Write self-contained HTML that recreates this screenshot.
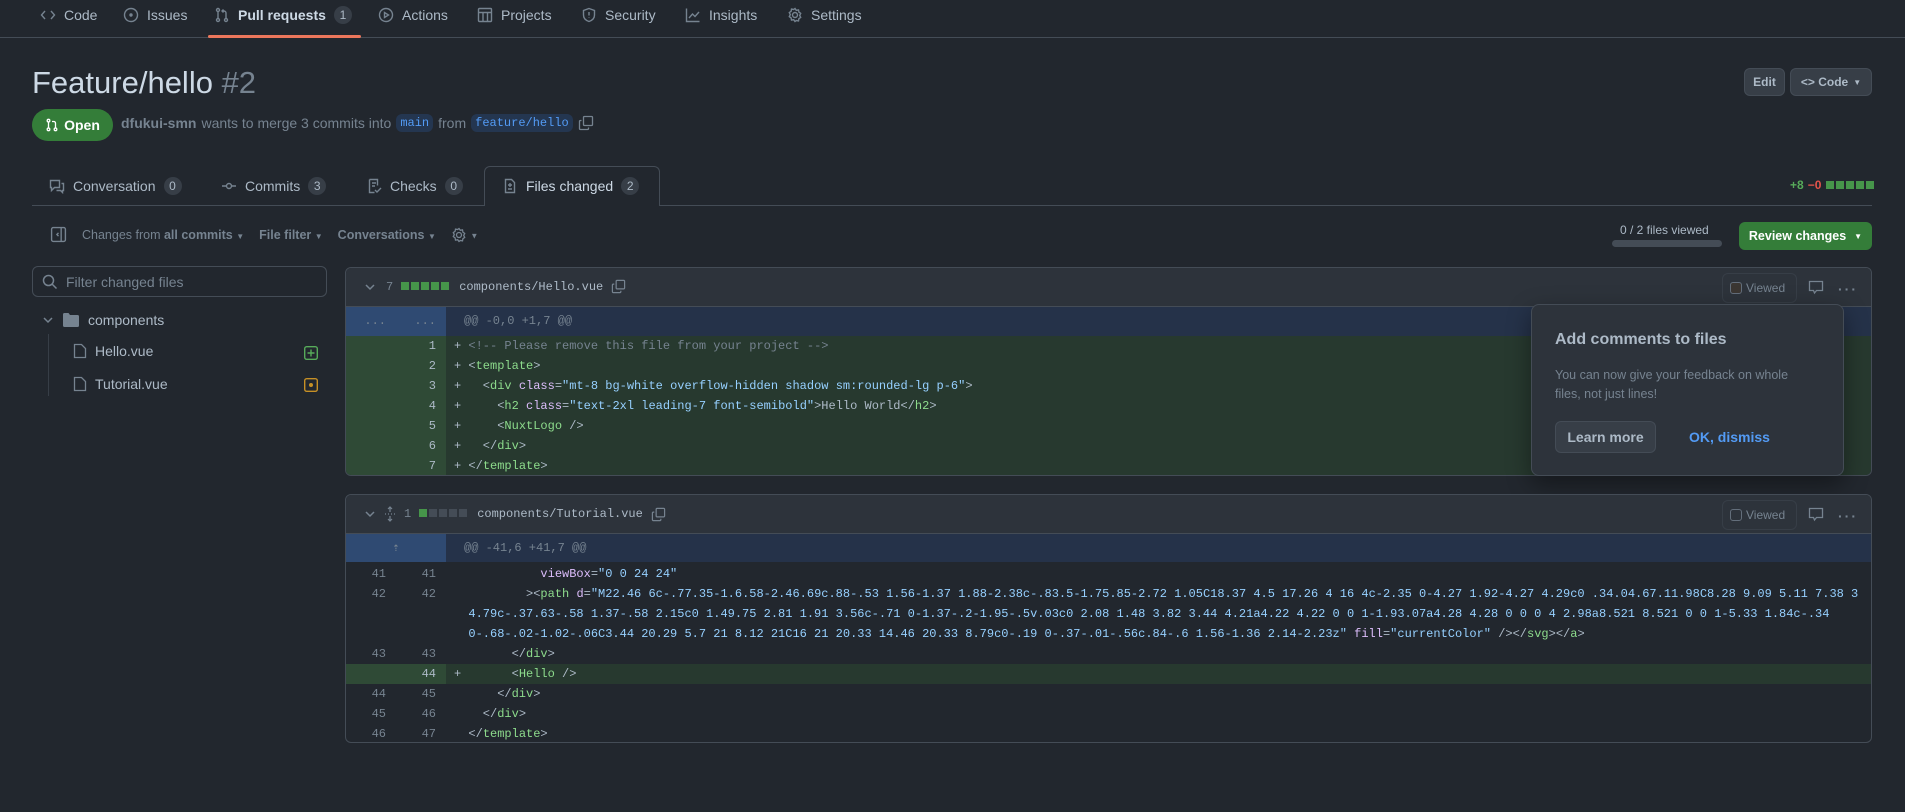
<!DOCTYPE html>
<html><head><meta charset="utf-8"><style>
*{box-sizing:border-box;margin:0;padding:0}
body{width:1905px;height:812px;background:#22272e;color:#adbac7;font-family:"Liberation Sans",sans-serif;font-size:14px;position:relative;overflow:hidden}
.a{position:absolute}
.nav{top:0;left:0;width:1905px;height:38px;border-bottom:1px solid #444c56}
.ni{position:absolute;top:5px;height:20px;display:flex;align-items:center;gap:8px;font-size:14px;color:#adbac7;white-space:nowrap}
.ni svg{width:16px;height:16px;fill:none;stroke:#768390;stroke-width:1.4}
.cnt{display:inline-block;background:#373e47;color:#adbac7;border-radius:10px;font-size:12px;min-width:18px;height:18px;line-height:18px;text-align:center;padding:0 5px}
.btn{background:#373e47;border:1px solid #444c56;border-radius:6px;color:#adbac7;font-size:12px;font-weight:bold;display:flex;align-items:center;justify-content:center}
.mono{font-family:"Liberation Mono",monospace;font-size:12px}
.tab{position:absolute;top:166px;height:39px;display:flex;align-items:center;gap:8px;font-size:14px;color:#adbac7}
.tab svg{width:16px;height:16px;fill:none;stroke:#768390;stroke-width:1.4}
.box{border:1px solid #444c56;border-radius:6px;overflow:hidden}
.fh{height:39px;background:#2d333b;border-bottom:1px solid #444c56;position:relative}
.row{height:20px;display:flex;white-space:pre;line-height:20px}
.g1{width:50px;text-align:right;padding-right:10px;color:#768390}
.g2{width:50px;text-align:right;padding-right:10px;color:#768390}
.cd{padding-left:8px;color:#adbac7;flex:1}
.add .g1,.add .g2{background:#2f4a36;color:#adbac7}
.add .cd{background:#27392f}
.hk{height:29px;line-height:29px}
.hk .g1,.hk .g2{background:#2f4a72}
.hk .cd{background:#253249;color:#768390;padding-left:18px}
.t{color:#8ddb8c}.at{color:#dcbdfb}.s{color:#96d0ff}.cm{color:#768390}
.sq{display:inline-block;width:8px;height:8px;margin-right:2px;background:#46954a}
.sqg{background:#444c56}
.viewed{position:absolute;top:5px;height:30px;width:75px;border:1px solid #373e47;border-radius:6px;display:flex;align-items:center;gap:4px;padding-left:7px;font-size:12px;color:#768390}
.cb{width:12px;height:12px;border:1px solid #636e7b;border-radius:3px;background:#3b3632}
.dots{position:absolute;left:1492px;top:13px;color:#768390;font-size:14px;letter-spacing:2px;font-family:"Liberation Sans",sans-serif;font-weight:bold}
</style></head><body>

<div class="a nav">
 <div class="ni" style="left:40px"><svg viewBox="0 0 16 16"><path d="M5 4L1.5 8 5 12M11 4l3.5 4L11 12"/></svg>Code</div>
 <div class="ni" style="left:123px"><svg viewBox="0 0 16 16"><circle cx="8" cy="8" r="6.5"/><circle cx="8" cy="8" r="1" fill="#768390"/></svg>Issues</div>
 <div class="ni" style="left:214px;font-weight:bold;color:#cdd9e5"><svg viewBox="0 0 16 16"><circle cx="4" cy="3" r="1.5"/><circle cx="4" cy="13" r="1.5"/><circle cx="12" cy="13" r="1.5"/><path d="M4 4.5v7M12 11.5V6a2 2 0 0 0-2-2H8M9.5 2.5L8 4l1.5 1.5"/></svg>Pull requests <span class="cnt" style="font-weight:normal">1</span></div>
 <div class="ni" style="left:378px"><svg viewBox="0 0 16 16"><circle cx="8" cy="8" r="6.5"/><path d="M6.5 5.5v5l4-2.5z"/></svg>Actions</div>
 <div class="ni" style="left:477px"><svg viewBox="0 0 16 16"><rect x="1.5" y="1.5" width="13" height="13" rx="1"/><path d="M1.5 5.5h13M6 5.5v9M10.5 5.5v9"/></svg>Projects</div>
 <div class="ni" style="left:581px"><svg viewBox="0 0 16 16"><path d="M8 1.5l5.5 2v4.5c0 3.5-2.5 5.5-5.5 6.5C5 13.5 2.5 11.5 2.5 8V3.5z M8 5v3.5M8 10.5v.5"/></svg>Security</div>
 <div class="ni" style="left:685px"><svg viewBox="0 0 16 16"><path d="M1.5 1.5v13h13M4 11l3.5-4 2.5 2.5L14 5"/></svg>Insights</div>
 <div class="ni" style="left:787px"><svg viewBox="0 0 16 16"><circle cx="8" cy="8" r="2.5"/><path d="M8 1.5l1.3 1.8 2.2-.4.4 2.2 1.8 1.3-1 2 1 2-1.8 1.3-.4 2.2-2.2-.4L8 14.5l-1.3-1.8-2.2.4-.4-2.2-1.8-1.3 1-2-1-2 1.8-1.3.4-2.2 2.2.4z"/></svg>Settings</div>
 <div class="a" style="left:208px;top:35px;width:153px;height:3px;background:#ec775c;border-radius:2px"></div>
</div>

<div class="a" style="left:32px;top:62px;font-size:31px;color:#cdd9e5;line-height:42px">Feature/hello <span style="color:#768390">#2</span></div>
<div class="btn a" style="left:1744px;top:68px;width:41px;height:28px">Edit</div>
<div class="btn a" style="left:1790px;top:68px;width:82px;height:28px;gap:5px">&lt;&gt; Code <span style="font-size:8px">▼</span></div>

<div class="a" style="left:32px;top:109px;width:81px;height:32px;background:#347d39;border-radius:16px;color:#fff;font-weight:bold;display:flex;align-items:center;justify-content:center;gap:5px;font-size:14px"><svg width="14" height="14" viewBox="0 0 16 16" fill="none" stroke="#fff" stroke-width="1.5"><circle cx="4" cy="3" r="1.5"/><circle cx="4" cy="13" r="1.5"/><circle cx="12" cy="13" r="1.5"/><path d="M4 4.5v7M12 11.5V6a2 2 0 0 0-2-2H8"/></svg>Open</div>
<div class="a" style="left:121px;top:114px;font-size:14px;color:#768390;display:flex;align-items:center;gap:5px;white-space:nowrap"><b style="color:#768390">dfukui-smn</b> wants to merge 3 commits into <span class="mono" style="background:#243650;color:#539bf5;padding:2px 4px;border-radius:6px">main</span> from <span class="mono" style="background:#243650;color:#539bf5;padding:2px 4px;border-radius:6px">feature/hello</span><svg width="16" height="16" viewBox="0 0 16 16" fill="none" stroke="#768390" stroke-width="1.3"><rect x="5.5" y="1.5" width="9" height="9" rx="1"/><path d="M3.5 5.5h-1a1 1 0 0 0-1 1v7a1 1 0 0 0 1 1h7a1 1 0 0 0 1-1v-1"/></svg></div>

<div class="a" style="left:32px;top:205px;width:1840px;height:1px;background:#444c56"></div>
<div class="tab" style="left:49px"><svg viewBox="0 0 16 16"><path d="M1.5 2.5h9v7h-5l-3 3v-3h-1z M12.5 5.5h2v7h-1v2l-2-2h-4"/></svg>Conversation <span class="cnt">0</span></div>
<div class="tab" style="left:221px"><svg viewBox="0 0 16 16"><circle cx="8" cy="8" r="2.5"/><path d="M1 8h4.5M10.5 8H15"/></svg>Commits <span class="cnt">3</span></div>
<div class="tab" style="left:366px"><svg viewBox="0 0 16 16"><path d="M3.5 1.5h8v6M3.5 1.5v13h5M6 5h4M6 8h3M9 12l2 2 4-4"/></svg>Checks <span class="cnt">0</span></div>
<div class="a" style="left:484px;top:166px;width:176px;height:40px;border:1px solid #444c56;border-bottom:none;border-radius:6px 6px 0 0;background:#22272e"></div>
<div class="tab" style="left:502px;color:#cdd9e5"><svg viewBox="0 0 16 16"><path d="M3.5 1.5h6l3 3v10h-9z M8 5v4M6 7h4M6 11h4"/></svg>Files changed <span class="cnt">2</span></div>
<div class="a" style="left:1790px;top:178px;font-size:12px;font-weight:bold;display:flex;align-items:center;gap:4px"><span style="color:#57ab5a">+8</span><span style="color:#e5534b">−0</span><span><span class="sq" style="margin:0 1px"></span><span class="sq" style="margin:0 1px"></span><span class="sq" style="margin:0 1px"></span><span class="sq" style="margin:0 1px"></span><span class="sq" style="margin:0 1px"></span></span></div>

<div class="a" style="left:50px;top:226px;display:flex;align-items:center;gap:15px;font-size:12.5px;color:#768390;white-space:nowrap">
 <svg width="17" height="17" viewBox="0 0 16 16" fill="none" stroke="#768390" stroke-width="1.3"><rect x="1.5" y="1.5" width="13" height="13" rx="1.5"/><path d="M10.5 1.5v13M8 6.5L6.5 8 8 9.5"/></svg>
 <span>Changes from <b>all commits</b> <span style="font-size:8px">▼</span></span>
 <span><b>File filter</b> <span style="font-size:8px">▼</span></span>
 <span><b>Conversations</b> <span style="font-size:8px">▼</span></span>
 <span><svg width="16" height="16" viewBox="0 0 16 16" fill="none" stroke="#768390" stroke-width="1.3" style="vertical-align:middle"><circle cx="8" cy="8" r="2.5"/><path d="M8 1.5l1.3 1.8 2.2-.4.4 2.2 1.8 1.3-1 2 1 2-1.8 1.3-.4 2.2-2.2-.4L8 14.5l-1.3-1.8-2.2.4-.4-2.2-1.8-1.3 1-2-1-2 1.8-1.3.4-2.2 2.2.4z"/></svg> <span style="font-size:8px">▼</span></span>
</div>
<div class="a" style="left:1620px;top:223px;font-size:12px;color:#adbac7">0 / 2 files viewed</div>
<div class="a" style="left:1612px;top:240px;width:110px;height:7px;border-radius:4px;background:#444c56"></div>
<div class="a" style="left:1739px;top:222px;width:133px;height:28px;background:#347d39;border-radius:6px;color:#fff;font-size:12.5px;font-weight:bold;display:flex;align-items:center;justify-content:center;gap:8px">Review changes <span style="font-size:8px">▼</span></div>

<div class="a" style="left:32px;top:266px;width:295px;height:31px;border:1px solid #444c56;border-radius:6px;display:flex;align-items:center;gap:8px;padding-left:9px;color:#768390;font-size:14px"><svg width="16" height="16" viewBox="0 0 16 16" fill="none" stroke="#768390" stroke-width="1.5"><circle cx="6.5" cy="6.5" r="5"/><path d="M10 10l4.5 4.5"/></svg>Filter changed files</div>
<div class="a" style="left:42px;top:312px;display:flex;align-items:center;gap:9px;font-size:14px;color:#adbac7"><svg width="12" height="12" viewBox="0 0 12 12" fill="none" stroke="#768390" stroke-width="1.5"><path d="M2 4l4 4 4-4"/></svg><svg width="16" height="14" viewBox="0 0 16 14"><path d="M0 1.5A1.5 1.5 0 0 1 1.5 0h4l1.5 2h7.5A1.5 1.5 0 0 1 16 3.5v9a1.5 1.5 0 0 1-1.5 1.5h-13A1.5 1.5 0 0 1 0 12.5z" fill="#768390"/></svg><span>components</span></div>
<div class="a" style="left:48px;top:334px;width:1px;height:62px;background:#373e47"></div>
<div class="a" style="left:73px;top:343px;display:flex;align-items:center;gap:8px;font-size:14px;color:#adbac7"><svg width="14" height="16" viewBox="0 0 14 16" fill="none" stroke="#768390" stroke-width="1.3"><path d="M1.5 1.5h7l4 4v9h-11z"/></svg>Hello.vue</div>
<div class="a" style="left:73px;top:376px;display:flex;align-items:center;gap:8px;font-size:14px;color:#adbac7"><svg width="14" height="16" viewBox="0 0 14 16" fill="none" stroke="#768390" stroke-width="1.3"><path d="M1.5 1.5h7l4 4v9h-11z"/></svg>Tutorial.vue</div>
<svg class="a" style="left:304px;top:346px" width="14" height="14" viewBox="0 0 14 14" fill="none" stroke="#57ab5a" stroke-width="1.4"><rect x=".7" y=".7" width="12.6" height="12.6" rx="2"/><path d="M7 3.5v7M3.5 7h7"/></svg>
<svg class="a" style="left:304px;top:378px" width="14" height="14" viewBox="0 0 14 14" fill="none" stroke="#c69026" stroke-width="1.4"><rect x=".7" y=".7" width="12.6" height="12.6" rx="2"/><circle cx="7" cy="7" r="1.3" fill="#c69026"/></svg>

<!-- file 1 -->
<div class="a box mono" style="left:345px;top:267px;width:1527px;height:209px">
 <div class="fh">
  <div class="a" style="left:18px;top:11px;display:flex;align-items:center;gap:8px;color:#adbac7"><svg width="12" height="12" viewBox="0 0 12 12" fill="none" stroke="#768390" stroke-width="1.5"><path d="M2 4l4 4 4-4"/></svg><span style="color:#768390;margin-left:2px">7</span><span><span class="sq"></span><span class="sq"></span><span class="sq"></span><span class="sq"></span><span class="sq"></span></span><span>components/Hello.vue</span><svg width="15" height="15" viewBox="0 0 16 16" fill="none" stroke="#768390" stroke-width="1.3"><rect x="5.5" y="1.5" width="9" height="9" rx="1"/><path d="M3.5 5.5h-1a1 1 0 0 0-1 1v7a1 1 0 0 0 1 1h7a1 1 0 0 0 1-1v-1"/></svg></div>
  <div class="viewed" style="left:1376px;font-family:'Liberation Sans',sans-serif"><span class="cb"></span>Viewed</div>
  <svg class="a" style="left:1462px;top:12px" width="16" height="16" viewBox="0 0 16 16" fill="none" stroke="#768390" stroke-width="1.3"><path d="M1.5 1.5h13v9h-6l-2 2.5-1-2.5h-4z"/></svg>
  <div class="dots">···</div>
 </div>
 <div class="row hk"><div class="g1">...</div><div class="g2">...</div><div class="cd">@@ -0,0 +1,7 @@</div></div>
 <div class="row add"><div class="g1"></div><div class="g2">1</div><div class="cd">+ <span class="cm">&lt;!-- Please remove this file from your project --&gt;</span></div></div>
 <div class="row add"><div class="g1"></div><div class="g2">2</div><div class="cd">+ &lt;<span class="t">template</span>&gt;</div></div>
 <div class="row add"><div class="g1"></div><div class="g2">3</div><div class="cd">+   &lt;<span class="t">div</span> <span class="at">class</span>=<span class="s">"mt-8 bg-white overflow-hidden shadow sm:rounded-lg p-6"</span>&gt;</div></div>
 <div class="row add"><div class="g1"></div><div class="g2">4</div><div class="cd">+     &lt;<span class="t">h2</span> <span class="at">class</span>=<span class="s">"text-2xl leading-7 font-semibold"</span>&gt;Hello World&lt;/<span class="t">h2</span>&gt;</div></div>
 <div class="row add"><div class="g1"></div><div class="g2">5</div><div class="cd">+     &lt;<span class="t">NuxtLogo</span> /&gt;</div></div>
 <div class="row add"><div class="g1"></div><div class="g2">6</div><div class="cd">+   &lt;/<span class="t">div</span>&gt;</div></div>
 <div class="row add"><div class="g1"></div><div class="g2">7</div><div class="cd">+ &lt;/<span class="t">template</span>&gt;</div></div>
</div>

<!-- popup -->
<div class="a" style="left:1531px;top:304px;width:313px;height:172px;background:#2d333b;border:1px solid #444c56;border-radius:8px;box-shadow:0 8px 24px rgba(0,0,0,.4)">
 <div class="a" style="left:23px;top:26px;font-size:16px;font-weight:bold;color:#adbac7">Add comments to files</div>
 <div class="a" style="left:23px;top:61px;width:260px;font-size:12.5px;line-height:19px;color:#768390">You can now give your feedback on whole files, not just lines!</div>
 <div class="a btn" style="left:23px;top:116px;width:101px;height:32px;font-size:14px;color:#adbac7">Learn more</div>
 <div class="a" style="left:157px;top:124px;font-size:14px;font-weight:bold;color:#539bf5">OK, dismiss</div>
</div>

<!-- file 2 -->
<div class="a box mono" style="left:345px;top:494px;width:1527px;height:249px">
 <div class="fh">
  <div class="a" style="left:18px;top:11px;display:flex;align-items:center;gap:8px;color:#adbac7"><svg width="12" height="12" viewBox="0 0 12 12" fill="none" stroke="#768390" stroke-width="1.5"><path d="M2 4l4 4 4-4"/></svg><svg width="12" height="16" viewBox="0 0 12 16" fill="none" stroke="#768390" stroke-width="1.2"><path d="M6 1v5M4 3l2-2 2 2M6 10v5M4 13l2 2 2-2M1 8h1M4 8h1M7 8h1M10 8h1"/></svg><span style="color:#768390">1</span><span><span class="sq"></span><span class="sq sqg"></span><span class="sq sqg"></span><span class="sq sqg"></span><span class="sq sqg"></span></span><span>components/Tutorial.vue</span><svg width="15" height="15" viewBox="0 0 16 16" fill="none" stroke="#768390" stroke-width="1.3"><rect x="5.5" y="1.5" width="9" height="9" rx="1"/><path d="M3.5 5.5h-1a1 1 0 0 0-1 1v7a1 1 0 0 0 1 1h7a1 1 0 0 0 1-1v-1"/></svg></div>
  <div class="viewed" style="left:1376px;font-family:'Liberation Sans',sans-serif"><span class="cb" style="background:transparent"></span>Viewed</div>
  <svg class="a" style="left:1462px;top:12px" width="16" height="16" viewBox="0 0 16 16" fill="none" stroke="#768390" stroke-width="1.3"><path d="M1.5 1.5h13v9h-6l-2 2.5-1-2.5h-4z"/></svg>
  <div class="dots">···</div>
 </div>
 <div class="row hk" style="height:28px;line-height:28px"><div style="width:100px;background:#2f4a72;text-align:center;color:#768390">⇡</div><div class="cd" style="background:#253249;color:#768390;padding-left:18px">@@ -41,6 +41,7 @@</div></div>
 <div style="height:2px"></div>
 <div class="row"><div class="g1">41</div><div class="g2">41</div><div class="cd">            <span class="at">viewBox</span>=<span class="s">"0 0 24 24"</span></div></div>
 <div class="row" style="height:60px"><div class="g1">42</div><div class="g2">42</div><div class="cd">          &gt;&lt;<span class="t">path</span> <span class="at">d</span>=<span class="s">"M22.46 6c-.77.35-1.6.58-2.46.69c.88-.53 1.56-1.37 1.88-2.38c-.83.5-1.75.85-2.72 1.05C18.37 4.5 17.26 4 16 4c-2.35 0-4.27 1.92-4.27 4.29c0 .34.04.67.11.98C8.28 9.09 5.11 7.38 3
  4.79c-.37.63-.58 1.37-.58 2.15c0 1.49.75 2.81 1.91 3.56c-.71 0-1.37-.2-1.95-.5v.03c0 2.08 1.48 3.82 3.44 4.21a4.22 4.22 0 0 1-1.93.07a4.28 4.28 0 0 0 4 2.98a8.521 8.521 0 0 1-5.33 1.84c-.34
  0-.68-.02-1.02-.06C3.44 20.29 5.7 21 8.12 21C16 21 20.33 14.46 20.33 8.79c0-.19 0-.37-.01-.56c.84-.6 1.56-1.36 2.14-2.23z"</span> <span class="at">fill</span>=<span class="s">"currentColor"</span> /&gt;&lt;/<span class="t">svg</span>&gt;&lt;/<span class="t">a</span>&gt;</div></div>
 <div class="row"><div class="g1">43</div><div class="g2">43</div><div class="cd">        &lt;/<span class="t">div</span>&gt;</div></div>
 <div class="row add"><div class="g1"></div><div class="g2">44</div><div class="cd">+       &lt;<span class="t">Hello</span> /&gt;</div></div>
 <div class="row"><div class="g1">44</div><div class="g2">45</div><div class="cd">      &lt;/<span class="t">div</span>&gt;</div></div>
 <div class="row"><div class="g1">45</div><div class="g2">46</div><div class="cd">    &lt;/<span class="t">div</span>&gt;</div></div>
 <div class="row"><div class="g1">46</div><div class="g2">47</div><div class="cd">  &lt;/<span class="t">template</span>&gt;</div></div>
</div>
</body></html>
